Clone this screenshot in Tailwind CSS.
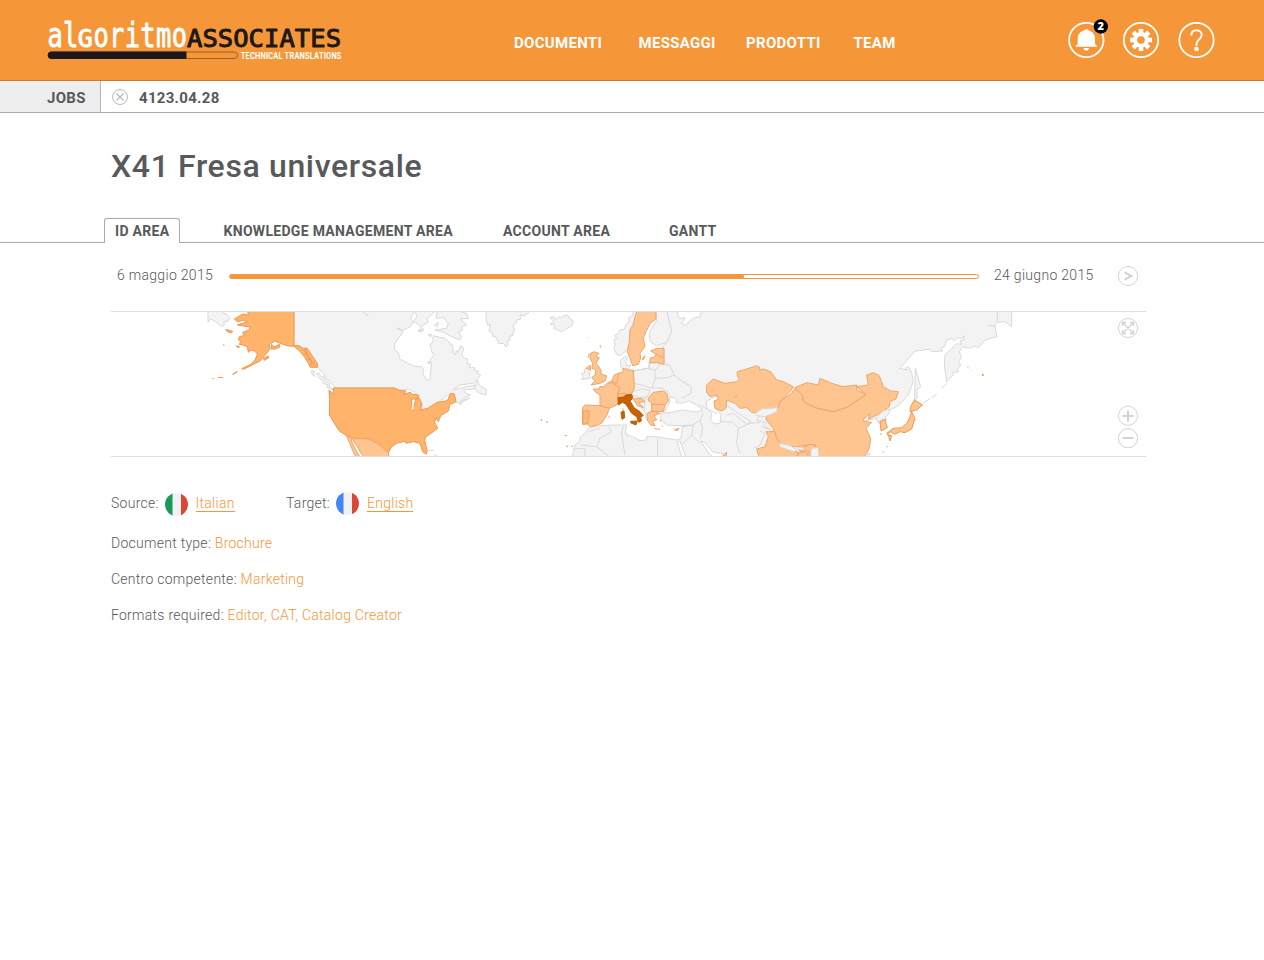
<!DOCTYPE html>
<html lang="it">
<head>
<meta charset="utf-8">
<title>X41 Fresa universale</title>
<script src="https://cdn.jsdelivr.net/npm/@tailwindcss/browser@4"></script>
</head>
<body class="h-[960px] overflow-hidden bg-white font-['Roboto',sans-serif] text-[#58595b]">
<header class="flex h-[81px] items-start border-b border-[#c97b31] bg-[#f59638] pl-[47px]">
  <svg class="mt-[15px] h-[50px] w-[300px] shrink-0 overflow-visible" viewBox="47 15 300 50" font-family="DejaVu Sans Mono, monospace">
    <g fill="#fff" stroke="#fff" stroke-width=".9" stroke-linejoin="round">
      <text transform="translate(47.4 46.700) scale(.77 1)" font-size="33" textLength="40">al</text>
      <text transform="translate(77.800 46.700)" font-size="25">G</text>
      <text transform="translate(93.400 46.700) scale(.77 1)" font-size="33" textLength="121.500">oritmo</text>
    </g>
    <text x="187" y="46.700" font-size="25.500" textLength="154" fill="#1c1819" stroke="#1c1819" stroke-width="1" stroke-linejoin="round">ASSOCIATES</text>
    <rect x="48.500" y="52" width="189" height="6.500" rx="3.250" fill="none" stroke="#9a5f2b"/>
    <path d="M51.500 51.500H186.500V59H51.500a3.700 3.700 0 0 1 0-7.500z" fill="#1c1819"/>
    <text transform="translate(240.700 58.900) scale(.8 1)" font-family="Roboto, sans-serif" font-weight="700" font-size="9.400" textLength="126" fill="#fff">TECHNICAL TRANSLATIONS</text>
  </svg>
  <nav class="ml-[167px] mt-[33px] flex text-[15px] font-bold leading-5 tracking-[.3px] text-white">
    <a class="w-[124.500px]">DOCUMENTI</a><a class="w-[107.500px]">MESSAGGI</a><a class="w-[107.500px]">PRODOTTI</a><a>TEAM</a>
  </nav>
  <svg class="ml-auto mr-[44px] mt-[15px] h-[50px] w-[160px] shrink-0" viewBox="1060 15 160 50">
    <g fill="none" stroke="#fff" stroke-width="1.800"><circle cx="1086.300" cy="40" r="17.200"/><circle cx="1141" cy="40" r="17.200"/><circle cx="1196.500" cy="40" r="17.200"/></g>
    <path d="M1075.700 46.800v-1c1.300-.4 2-1.400 2-3v-4.300c0-4 2.300-6.700 5.800-7.700l2-1.600h1.700l2 1.600c3.500 1 5.800 3.700 5.800 7.700v4.300c0 1.600.7 2.600 2 3v1zM1083.500 48h5.500c-.3 3.600-5.200 3.600-5.500 0z" fill="#fff"/>
    <circle cx="1100.800" cy="26.500" r="7.200" fill="#000"/>
    <text x="1100.800" y="30.300" text-anchor="middle" font-family="Open Sans, sans-serif" font-size="11" font-weight="800" fill="#fff">2</text>
    <g fill="#fff" transform="translate(1141 40)">
      <path fill-rule="evenodd" d="M-8-1A8 8 0 1 0 8 0 8 8 0 1 0-8 0zM-3.800 0a3.800 3.800 0 1 1 7.600 0 3.800 3.800 0 1 1-7.600 0z"/>
      <g id="teeth"><rect x="-2.300" y="-11" width="4.600" height="5"/><rect x="-2.300" y="6" width="4.600" height="5"/><rect x="-11" y="-2.300" width="5" height="4.600"/><rect x="6" y="-2.300" width="5" height="4.600"/></g>
      <use href="#teeth" transform="rotate(45)"/>
    </g>
    <path d="M1191.300 35.500c0-3.400 2.200-5.300 5.200-5.300s5.200 2 5.200 4.900c0 4.400-5.200 4.500-5.200 8.800V46" fill="none" stroke="#fff" stroke-width="1.900"/><circle cx="1196.500" cy="49" r="2.300" fill="#fff"/>
  </svg>
</header>

<div class="flex h-8 items-stretch border-b border-[#a7a9ac] text-[15px] font-bold">
  <div class="w-[101px] border-r border-[#b5b5b5] bg-[#eee] pl-[47px] pt-[7px] leading-5 tracking-[.3px]">JOBS</div>
  <svg class="ml-[10px] mt-[7px] size-[18px]" viewBox="0 0 18 18" fill="none" stroke="#b9b9b9"><circle cx="9" cy="9" r="7.500"/><path d="M5.500 5.500l7 7m0-7l-7 7" stroke-width="1.200"/></svg>
  <div class="ml-[10px] pt-[7px] leading-5 tracking-[.3px]">4123.04.28</div>
</div>

<h1 class="ml-[111px] mt-[33px] h-10 text-[32px] font-medium leading-10 tracking-[.64px]">X41 Fresa universale</h1>

<div class="mt-[32px] flex h-[25px] text-[14px] font-bold leading-6 tracking-[.3px]">
  <div class="w-[104px] border-b border-[#a7a9ac]"></div>
  <div class="w-[76px] rounded-t-[3px] border border-b-0 border-[#a7a9ac] pl-[10px]">ID AREA</div>
  <div class="flex flex-1 border-b border-[#a7a9ac] pl-[43.500px] pt-px"><span class="w-[279.500px]">KNOWLEDGE MANAGEMENT AREA</span><span class="w-[166px]">ACCOUNT AREA</span><span>GANTT</span></div>
</div>

<main class="ml-[111px] w-[1035px] text-[14px] font-[350]">
  <div class="flex h-[68px] items-start pl-[6px] pt-[22px] leading-5 tracking-[.3px]">
    <span class="w-[112px]">6 maggio 2015</span>
    <div class="mt-[9px] h-[5px] w-[750px] rounded-full border border-[#f59638] bg-white"><div class="-mt-px h-[5px] w-[514px] rounded-full bg-[#f59638]"></div></div>
    <span class="ml-[15px]">24 giugno 2015</span>
    <svg class="ml-auto mr-[7px] size-[22px]" viewBox="0 0 22 22" fill="none" stroke="#d3d3d3"><circle cx="11" cy="11" r="9.600"/><path d="M7.500 7.300l7 3.700-7 3.700" stroke-width="2"/></svg>
  </div>
  <div class="relative h-[146px] border-y border-[#e0e0e0]">
    <svg class="block h-[144px] w-[1035px]" viewBox="0 0 1035 144">
      <g transform="translate(89 -7) scale(.33333)" stroke-width="3" stroke-linejoin="round">
        <g fill="#f3f3f3" stroke="#d9d9d9">
          <path d="M24 15V52L32 42 50 52 65 65 74 58 70 50 84 48 90 38 80 28 70 24V15z"/>
          <path d="M282 15V122L298 124 315 130 330 148 352 175 355 190 372 207 378 222 392 230 402 242 405 249H583L600 256 625 252 645 262 660 280 668 300 665 318 690 308 715 292 742 270 765 268 768 292 778 293 790 280 812 270 797 265 790 255 822 252 825 240 800 245 758 255 780 240 822 234 842 210 830 205 836 198 822 196 825 188 808 188 812 178 800 175 804 163 790 158 785 150 792 130 782 122 775 142 768 135 768 148 760 145 758 120 752 118 745 108 735 100 712 95 700 92 698 110 690 120 695 140 702 150 690 165 695 180 692 195 690 222 680 226 668 205 672 195 665 185 645 185 625 175 598 162 597 145 583 135 585 115 595 100 610 80 590 70 612 75 630 65 640 50 632 42 645 15z"/>
          <path d="M645 15L650 35 640 50 655 58 672 75 655 80 668 62 685 50 680 42 705 20V15zM703 60L715 52 712 65zM712 15L708 40 730 38 745 55 740 70 705 75 730 82 755 95 780 105 785 95 775 80 788 75 785 65 800 60 780 42 805 40 800 25 785 22 780 15zM655 75L666 77 660 82zM684 90L695 88 692 96zM682 172L690 170 688 178zM823 250L832 225 838 240 860 255 858 270 840 265 830 258zM778 295L790 285 810 278 790 290 780 300zM335 195L345 200 338 206 346 215 336 208zM348 205L358 205 362 215 372 216 376 228 390 236 388 244 402 255 382 248 384 240 368 234 370 226 360 222zM685 436L702 436M702 448L712 454"/>
          <path d="M490 22L505 32" fill="none"/>
        </g>
        <g fill="#ffb36b" stroke="#ec9850">
          <path d="M282 15H142L145 30 128 27 103 42 112 50 130 46 142 50 112 60 150 66 148 75 128 82 132 92 118 95 115 104 122 110 118 118 128 120 142 125 145 142 152 136 165 138 172 148 165 165 152 178 125 191 130 193 155 181 180 168 200 145 210 132 208 118 225 108 240 115 265 123 282 124 300 139 315 158 325 175 331 187 352 187 352 175 335 150 320 128 310 132 298 122 282 122z"/>
          <path d="M78 73L98 79 94 84 82 80zM108 123L118 124 116 129zM190 160L205 153 206 159 193 166zM98 208L112 199 106 204zM54 217L70 218M37 221L42 221M69 119L74 121M213 132L215 118 222 126 238 118 240 126 225 132zM310 134L322 150 333 168 346 181M316 130L320 148 335 170M329 180L340 170M312 150L320 148M322 164L334 160"/>
          <path d="M400 249H583L598 256 618 258 612 268 630 262 638 268 655 270 655 280 636 283 634 312 638 318 642 300 645 285 655 277 665 295 662 315 683 310 712 292 742 287 752 265 762 266 768 290 750 298 745 318 722 332 715 350 708 338 704 352 713 370 700 380 678 395 674 405 682 440 678 448 668 440 660 415 640 410 618 415 614 409 590 415 575 425 565 443 545 425 530 415 508 402 465 400 440 392 418 378 400 350 388 330 389 285 387 255 400 268z"/>
        </g>
        <path d="M440 393L465 400 508 402 530 415 545 425 565 443 567 465H500L485 448 470 422 455 400 455 410 468 435 485 465H472L455 430 448 412z" fill="#ffc590" stroke="#eda56a"/>
        <path d="M637 286L645 284 641 298 640 314 635 314z" fill="#fff"/>
      </g>
      <g transform="translate(389 -7) scale(.33333)" stroke-width="3" stroke-linejoin="round">
        <g fill="#f3f3f3" stroke="#d9d9d9">
          <path d="M-42 15V38L-38 60-30 58-33 78-22 84-22 94-12 96-3 116 10 115 18 126 25 118 20 108 30 106 28 95 40 90 38 80 45 76 38 62 48 55 52 44 62 42 60 30 72 32 85 25V15z"/>
          <path d="M150 38L163 35 166 44 178 35 184 38 190 32 205 32 208 40 220 48 215 63 185 80 160 70 165 60 150 58 163 50z"/>
          <path d="M402 15L396 34 386 38 388 48 378 60 372 74 360 74 358 82 344 92 350 100 342 104 345 118 342 130 350 148 360 152 382 135 388 110 390 75 405 40 413 15z"/>
          <path d="M362 165L378 152 382 160 376 170 382 182 392 180 388 190 372 192 362 185z"/>
          <path d="M244 205L255 203 252 194 258 190 270 195 268 220 245 224 250 214z"/>
          <path d="M468 20V15H500L515 80 500 112 470 122 450 110 447 85 470 45z"/>
          <path d="M500 15L515 80 500 112 485 125 492 130 492 178 470 175 448 172 445 190 400 197 403 250 396 270 398 282 410 285 418 300 430 315 438 325 436 340 446 350 452 320 495 320 502 305 510 290 510 275 525 278 530 285 528 292 545 295 565 288 590 300 608 315 590 321 545 315 515 322 482 325 483 345 500 360 540 362 548 365 542 400 530 405 500 400 470 395 440 395 440 405 420 407 400 396 385 390 375 385 380 360 340 360 300 362 270 365 255 385 240 398 240 408 225 420 215 465H1100L1110 400 1085 350 1130 340 1135 355 1160 345 1150 325 1195 302 1225 270 1240 230 1235 203 1225 185 1215 190 1222 196 1200 190 1245 138 1290 133 1295 140 1328 138 1324 130 1334 124 1340 105 1358 100 1362 108 1372 98 1385 100 1393 92 1390 105 1380 108 1384 118 1370 116 1355 130 1335 150 1333 180 1340 230 1360 210 1358 202 1375 200 1372 192 1382 180 1376 170 1384 158 1382 150 1378 140 1388 125 1410 130 1425 123 1435 128 1455 105 1490 95 1485 60 1492 52 1515 50 1535 65V15z"/>
          <path d="M1246 190L1262 245 1250 255 1252 280 1243 285 1245 240z"/>
        </g>
        <path d="M530 15L537 40 555 38 545 55 555 62 578 40 600 35 605 15zM620 288L650 273 656 283 642 290 650 315 663 328 660 355 642 357 632 345 635 325 620 305zM532 410L540 408 560 465H548zM602 408L614 412 640 442 670 446 680 465H655L630 450z" fill="#fff" stroke="#d9d9d9"/>
        <g fill="none" stroke="#d9d9d9">
          <path d="M402 198L440 190 465 195 465 225 455 248 440 245 425 240 400 235M465 195L485 175 510 182 522 210 502 218 465 220M455 248L490 250 505 262M522 210L540 225 575 245 572 265 545 280M448 178L452 195M398 260L425 252 450 255 442 275 420 278 398 270M442 280L455 295 458 315M420 290L440 278M435 285L432 315M510 270L500 262M596 300L650 325M610 325L600 345 580 360 545 362M580 360L575 390 545 420M600 345L608 370 602 400M660 350L700 352 715 370 710 415 720 445M678 300L700 315 755 352 740 358 700 325 680 330M715 370L750 355 780 352M780 378L795 385 780 420 760 430M325 365L335 380 300 400 290 425 240 420M370 362L365 385 375 450M375 385L385 395M473 400V460M290 425L335 460M220 432L255 430 255 460M548 365L580 360M575 390L600 415M265 380L300 370M800 325L835 315 780 330 770 345 800 355M785 365L815 375M788 358L820 380M1492 15V52M1465 60L1485 64M1270 295L1290 280M1295 278L1310 268M1325 250L1340 235M1400 184L1408 190M1412 194L1416 197M262 96L266 100"/>
        </g>
        <g fill="#ffc590" stroke="#eda56a">
          <path d="M412 15H468V42L450 55 438 80 430 100 435 125 420 145 422 160 415 178 398 182 390 160 382 140 388 110 390 75 400 60 405 35z"/>
          <path d="M427 162L434 152 434 158 428 165zM452 138L470 130 492 130 492 178 470 172 448 174 452 158 462 158 468 148zM468 148L490 158M300 120L302 128"/>
          <path d="M272 145L282 140 296 145 288 155 298 158 288 175 300 190 305 208 320 212 315 228 300 235 273 240 285 228 275 218 285 210 288 195 276 190 278 175 270 160zM258 190L270 180 272 194zM268 145L264 158"/>
          <path d="M337 228L325 232 310 245 300 244 298 252 280 252 285 260 300 270 300 302 328 310 350 300 356 290 352 270 360 248z"/>
          <path d="M335 228L343 210 355 205 370 200 368 190 385 195 400 195 403 250 395 265 375 270 352 268 360 248 345 240z"/>
          <path d="M355 205L352 230 345 240M325 235L350 232" fill="none"/>
          <path d="M352 268L375 264 378 275 355 282z"/>
          <path d="M247 308L255 300 300 302 328 310 322 328 305 355 285 362 272 366 262 357 248 358z"/>
          <path d="M250 318L268 318 264 355 248 358z" fill="#ffb875"/>
          <path d="M448 275L460 262 492 258 502 270 505 288 495 300 490 320 455 318 455 295 444 285zM455 298H497M400 282L425 280 435 290 415 292 430 308 412 302zM442 325L455 318 480 325 462 332 470 345 458 348 465 362 452 360 442 345zM463 371L480 373M523 374L537 370 532 377zM325 335L330 337M368 310L370 318M480 345L483 350M484 362L488 365"/>
          <path d="M620 240L640 222 675 235 710 230 718 222 712 212 712 200 740 192 770 182 780 188 778 196 790 192 812 200 830 225 850 230 880 245 870 260 840 290 838 312 800 310 775 325 755 322 740 308 720 310 705 295 680 285 678 310 665 318 645 310 642 288 655 283 650 270 630 275 620 262z"/>
          <path d="M703 276L712 273M668 452L680 442 678 456z"/>
        </g>
        <path d="M354 278L370 276 378 270 395 268 398 280 390 288 402 308 420 320 430 332 422 335 424 348 416 352 410 335 395 325 378 298 368 292 355 300zM363 322L372 318 374 338 366 343zM392 349L412 348 408 360 393 354z" fill="#c76200" stroke="#b95d05"/>
        <path d="M122 344L126 346M139 350L143 352M195 391L200 392M199 423L203 425M215 423L218 424" stroke="#ec9850" stroke-width="4"/>
      </g>
      <g transform="translate(629 -7) scale(.33333)" fill="#ffc590" stroke="#eda56a" stroke-width="3" stroke-linejoin="round">
        <path d="M165 250L188 272 190 290 225 308 280 320 325 305 378 268 350 245 385 240 380 210 400 203 418 212 430 245 452 258 475 260 468 282 450 290 448 305 420 325 400 335 385 343 390 325 368 345 375 350 395 352 378 370 392 400 388 430 375 450 380 465H230L238 430 215 418 175 425 150 425 118 415 105 395 100 370 78 345 80 330 115 308 120 290 155 265z"/>
        <path d="M165 248L200 233 235 240 240 220 275 235 310 245 350 240 350 255 378 268 325 305 280 320 225 308 190 290 188 272z"/>
        <path d="M78 380L105 380 110 400 120 415 145 430 172 440 172 465H60L50 432 75 425 85 395zM175 432L210 418 228 420 210 455 205 438 180 440zM175 442L200 440 210 465H172z"/>
        <path d="M118 415L150 422 168 432 165 440 140 433 120 425zM174 428L190 428 190 434 174 434zM215 430L236 428 235 465H210z" fill="#f3f3f3" stroke="#d9d9d9"/>
        <path d="M45 325L65 312 112 308 110 320 75 335 50 332z" fill="#f3f3f3" stroke="#d9d9d9"/>
        <path d="M408 337L430 318 450 312 445 328 430 342 412 350z" fill="#f3f3f3" stroke="#d9d9d9"/>
        <path d="M420 350L435 343 442 368 423 378zM523 285L548 300 530 315 510 320 512 305zM515 320L525 340 515 372 495 383 480 380 465 388 452 380 442 390 455 392 450 408 445 390 440 385 460 370 485 368 500 355 508 340zM420 386L425 388M440 427L443 424M428 440L432 442M385 450L390 445" stroke="#eb9950"/>
        <path d="M726 210H731" stroke="#e08a35" stroke-width="5"/>
      </g>
    </svg>
    <svg class="absolute right-[7px] top-[5px] h-[133px] w-[22px]" viewBox="0 0 22 133" fill="none" stroke="#d3d3d3">
      <circle cx="11" cy="11" r="9.600"/><circle cx="11" cy="98.800" r="9.600"/><circle cx="11" cy="121.200" r="9.600"/>
      <path d="M6 6l10 10m0-10L6 16M5.500 9V5.500H9M13 5.500h3.500V9M16.500 13v3.500H13M9 16.500H5.500V13" stroke-width="1.300"/>
      <path d="M5.500 99h11M11 93.500v11M5.500 121h11" stroke-width="2"/>
    </svg>
  </div>
  <div class="mt-[34px] flex h-6 items-center leading-5 tracking-[.27px]">
    <span class="w-[54px]">Source:</span>
    <svg class="mt-[3px] size-[23px]" viewBox="0 0 23 23"><clipPath id="round"><circle cx="11.500" cy="11.500" r="11.500"/></clipPath><g clip-path="url(#round)"><path d="M0 0h8v23H0z" fill="#179b57"/><path d="M7.500 0h8.500v23H7.500z" fill="#f2f2f2"/><path d="M16 0h7v23h-7z" fill="#dc4637"/></g></svg>
    <a class="ml-[7.500px] h-[17px] w-[39.500px] border-b border-[#f59638] leading-[17px] text-[#f59638]">Italian</a>
    <span class="ml-[51px] w-[50px]">Target:</span>
    <svg class="size-[23px]" viewBox="0 0 23 23"><g clip-path="url(#round)"><path d="M0 0h8v23H0z" fill="#4285f4"/><path d="M7.500 0h8.500v23H7.500z" fill="#f2f2f2"/><path d="M16 0h7v23h-7z" fill="#dc4637"/></g></svg>
    <a class="ml-[8px] h-[17px] w-[46px] border-b border-[#f59638] leading-[17px] text-[#f59638]">English</a>
  </div>
  <div class="mt-[18px] flex flex-col gap-4 leading-5 tracking-[.27px]">
    <p>Document type: <span class="text-[#f59638]">Brochure</span></p>
    <p>Centro competente: <span class="text-[#f59638]">Marketing</span></p>
    <p>Formats required: <span class="text-[#f59638]">Editor, CAT, Catalog Creator</span></p>
  </div>
</main>
</body>
</html>
